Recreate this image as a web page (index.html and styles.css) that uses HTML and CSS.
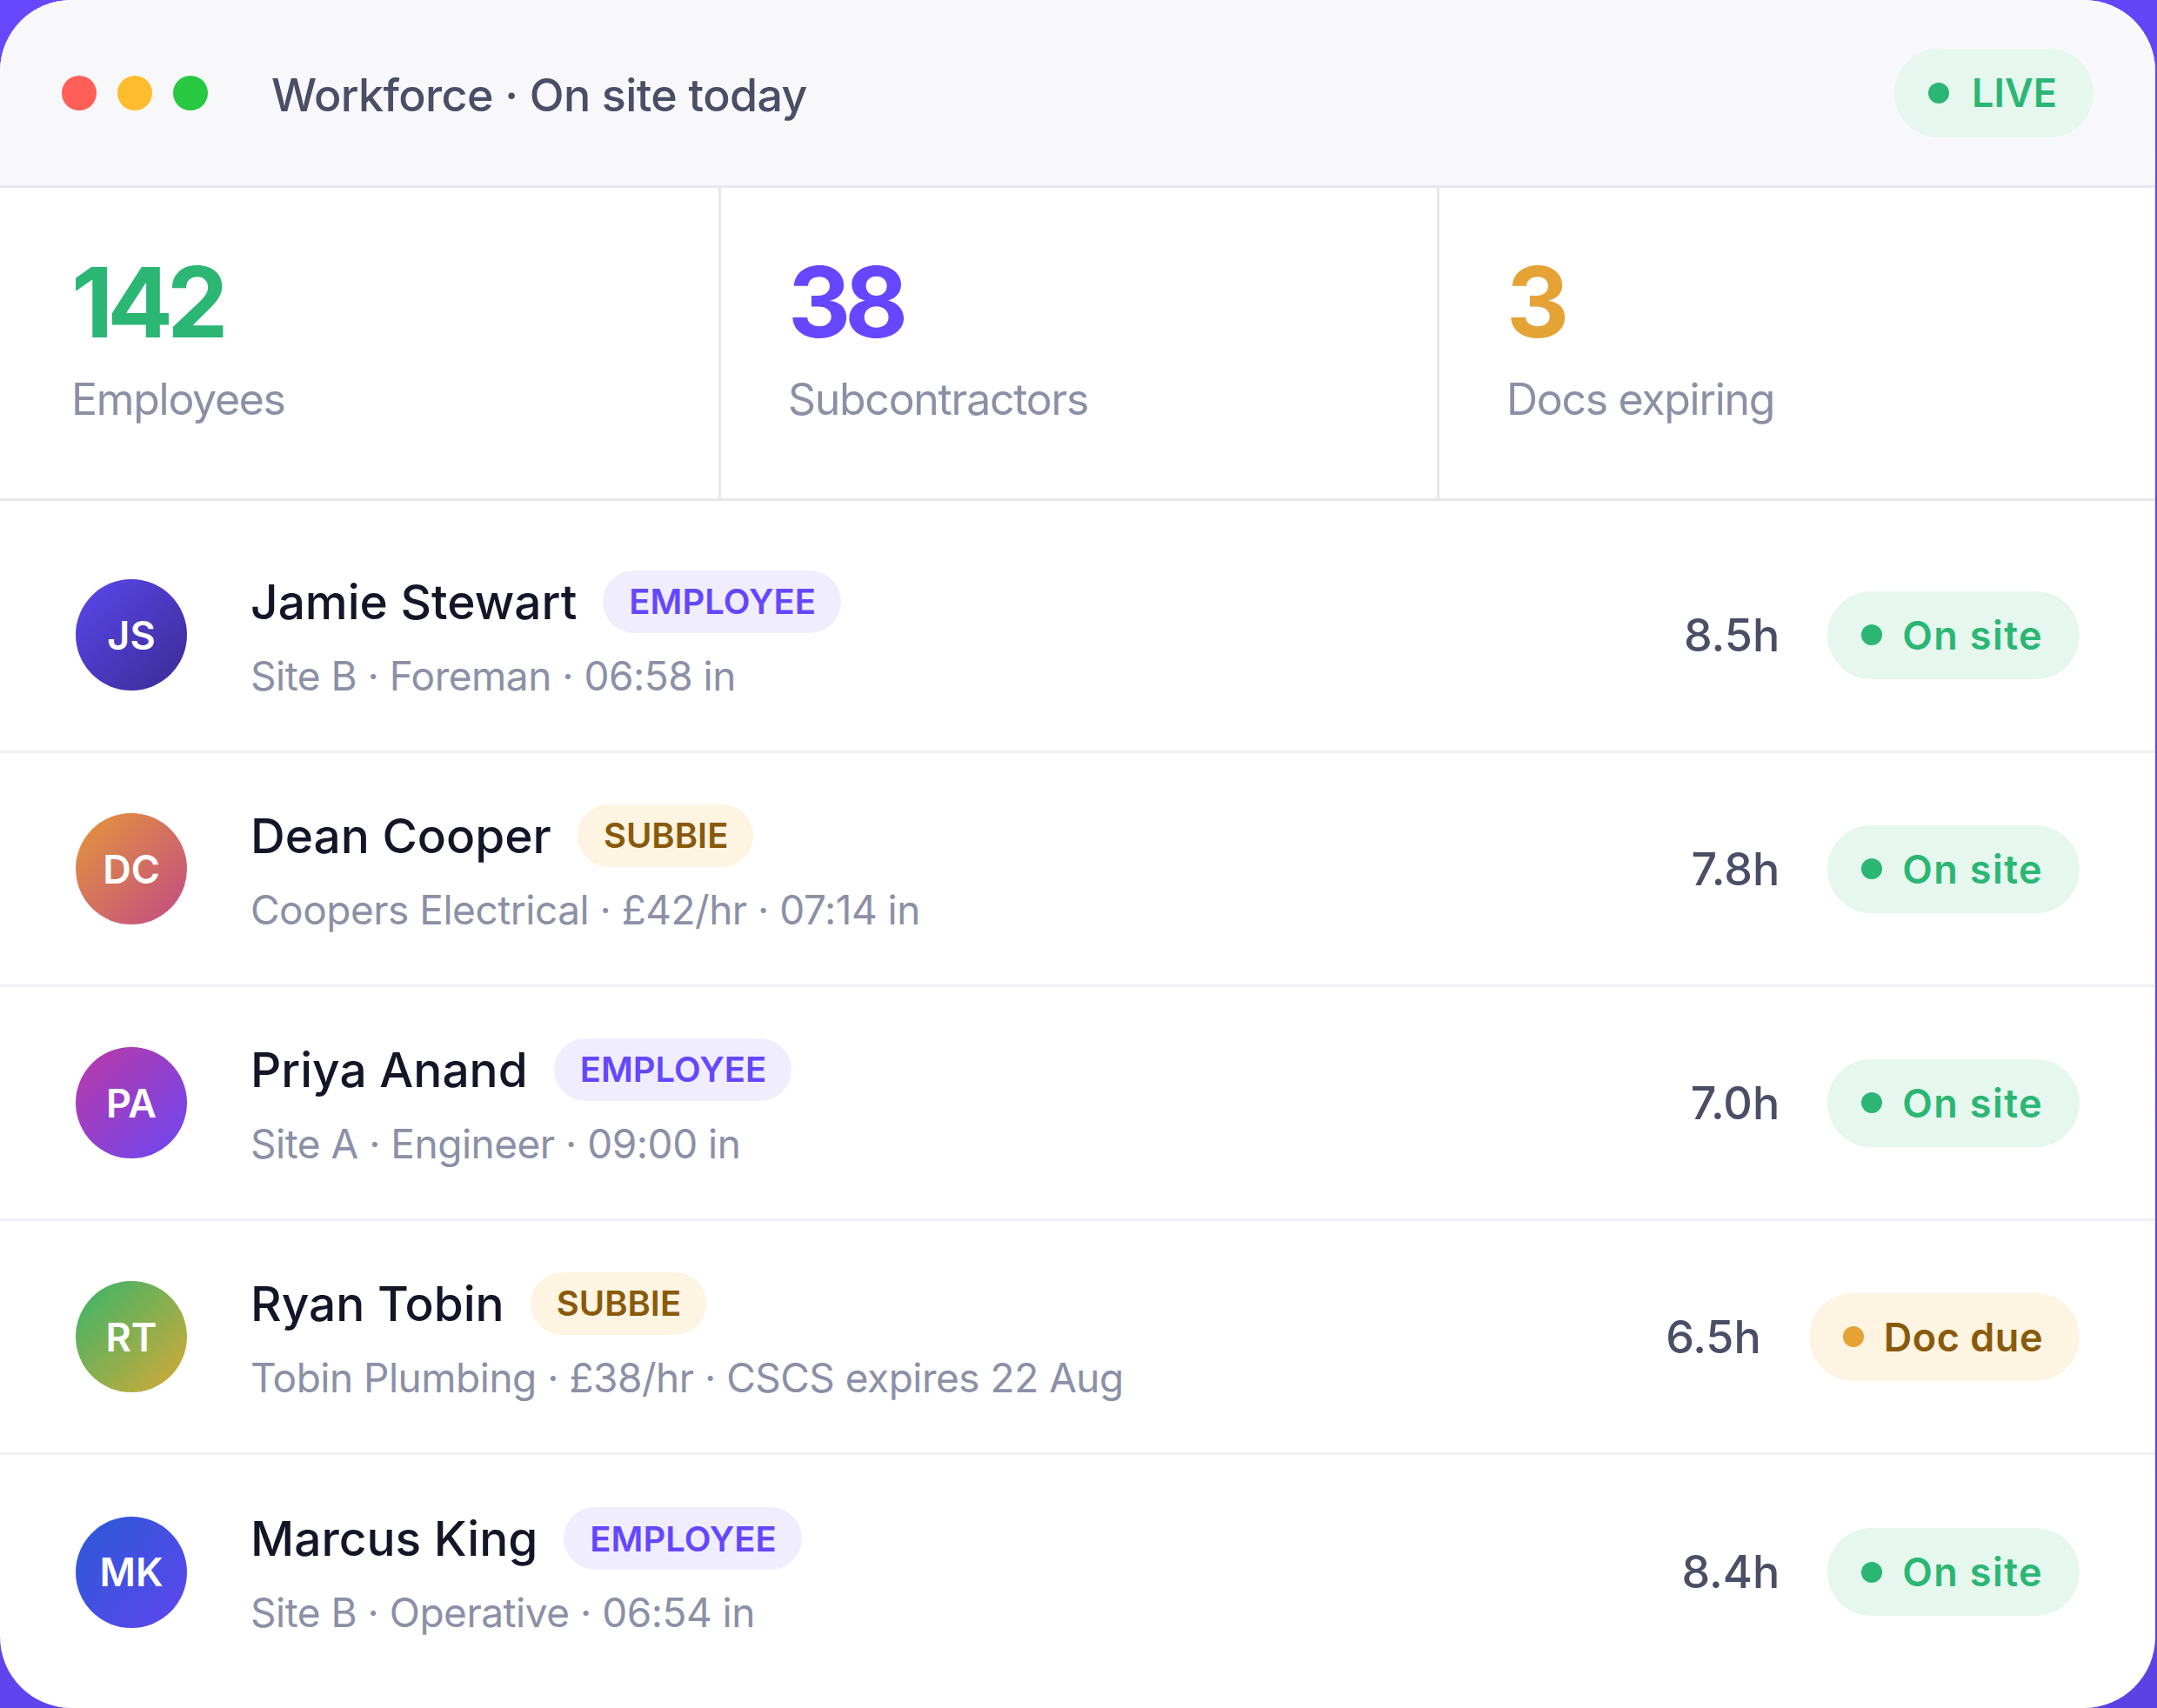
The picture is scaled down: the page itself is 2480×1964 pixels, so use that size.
FILE: index.html
```html
<!DOCTYPE html>
<html lang="en">
<head>
<meta charset="utf-8">
<title>Workforce · On site today</title>
<link rel="stylesheet" href="styles.css">
</head>
<body>
<div class="window">
  <header class="titlebar">
    <div class="lights">
      <span class="light red"></span>
      <span class="light yellow"></span>
      <span class="light green"></span>
    </div>
    <div class="title">Workforce · On site today</div>
    <div class="live"><span class="dot"></span>LIVE</div>
  </header>

  <section class="stats">
    <div class="stat">
      <div class="num num-green">142</div>
      <div class="label">Employees</div>
    </div>
    <div class="stat">
      <div class="num num-purple">38</div>
      <div class="label">Subcontractors</div>
    </div>
    <div class="stat">
      <div class="num num-amber">3</div>
      <div class="label">Docs expiring</div>
    </div>
  </section>

  <section class="list">
    <div class="row">
      <div class="avatar av-js">JS</div>
      <div class="info">
        <div class="nameline"><span class="name">Jamie Stewart</span><span class="tag tag-emp">EMPLOYEE</span></div>
        <div class="sub">Site B · Foreman · 06:58 in</div>
      </div>
      <div class="hours">8.5h</div>
      <div class="status ok"><span class="dot"></span>On site</div>
    </div>
    <div class="row">
      <div class="avatar av-dc">DC</div>
      <div class="info">
        <div class="nameline"><span class="name">Dean Cooper</span><span class="tag tag-sub">SUBBIE</span></div>
        <div class="sub">Coopers Electrical · £42/hr · 07:14 in</div>
      </div>
      <div class="hours">7.8h</div>
      <div class="status ok"><span class="dot"></span>On site</div>
    </div>
    <div class="row">
      <div class="avatar av-pa">PA</div>
      <div class="info">
        <div class="nameline"><span class="name">Priya Anand</span><span class="tag tag-emp">EMPLOYEE</span></div>
        <div class="sub">Site A · Engineer · 09:00 in</div>
      </div>
      <div class="hours">7.0h</div>
      <div class="status ok"><span class="dot"></span>On site</div>
    </div>
    <div class="row">
      <div class="avatar av-rt">RT</div>
      <div class="info">
        <div class="nameline"><span class="name">Ryan Tobin</span><span class="tag tag-sub">SUBBIE</span></div>
        <div class="sub">Tobin Plumbing · £38/hr · CSCS expires 22 Aug</div>
      </div>
      <div class="hours">6.5h</div>
      <div class="status warn"><span class="dot"></span>Doc due</div>
    </div>
    <div class="row">
      <div class="avatar av-mk">MK</div>
      <div class="info">
        <div class="nameline"><span class="name">Marcus King</span><span class="tag tag-emp">EMPLOYEE</span></div>
        <div class="sub">Site B · Operative · 06:54 in</div>
      </div>
      <div class="hours">8.4h</div>
      <div class="status ok"><span class="dot"></span>On site</div>
    </div>
  </section>
</div>
</body>
</html>
```

FILE: styles.css
```css
* { box-sizing: border-box; }

html, body {
  margin: 0;
  padding: 0;
}

body {
  width: 2480px;
  height: 1964px;
  overflow: hidden;
  background: linear-gradient(160deg, #6648ff 0%, #5c42e4 100%);
  font-family: Inter, "Noto Sans", "Liberation Sans", sans-serif;
}

.window {
  width: 2478px;
  height: 1964px;
  background: #ffffff;
  border-radius: 82px;
  overflow: hidden;
}

/* Title bar */
.titlebar {
  height: 216px;
  background: #f8f8fb;
  border-bottom: 3px solid #e7e7ee;
  display: flex;
  align-items: center;
  padding: 0 71px;
}

.lights {
  display: flex;
  gap: 24px;
}

.light {
  width: 40px;
  height: 40px;
  border-radius: 50%;
}
.red { background: #ff5f57; }
.yellow { background: #febc2e; }
.green { background: #28c840; }

.title {
  margin-left: 73px;
  margin-top: 5px;
  font-size: 52px;
  font-weight: 500;
  color: #4a4e66;
  letter-spacing: -0.6px;
}

.live {
  margin-left: auto;
  height: 102px;
  border-radius: 51px;
  background: #e5f7ee;
  display: flex;
  align-items: center;
  padding: 0 42px 0 39px;
  gap: 26px;
  font-size: 45px;
  font-weight: 600;
  letter-spacing: 0;
  color: #2bb673;
}
.live .dot {
  width: 24px;
  height: 24px;
  border-radius: 50%;
  background: #2bb673;
}

/* Stats */
.stats {
  display: grid;
  grid-template-columns: repeat(3, 1fr);
  border-bottom: 3px solid #e7e7ee;
}

.stat {
  height: 357px;
  padding: 75px 0 0 82px;
}
.stat + .stat {
  border-left: 3px solid #e7e7ee;
  padding-left: 77px;
}

.num {
  font-size: 112px;
  font-weight: 700;
  line-height: 1;
  letter-spacing: -7px;
}
.num-green { color: #2bb673; }
.num-purple { color: #6447ff; }
.num-amber { color: #e5a336; }

.label {
  margin-top: 26px;
  font-size: 50px;
  line-height: 60px;
  color: #8c90a6;
  letter-spacing: -1.3px;
}

/* List */
.list {
  padding-top: 21px;
}

.row {
  height: 269px;
  display: flex;
  align-items: center;
  padding: 0 87px;
  border-bottom: 3px solid #efeff4;
}
.row:last-child { border-bottom: none; }

.avatar {
  width: 128px;
  height: 128px;
  border-radius: 50%;
  flex: none;
  display: flex;
  align-items: center;
  justify-content: center;
  color: #ffffff;
  font-size: 45px;
  font-weight: 600;
}
.av-js { background: linear-gradient(135deg, #5b47ee 0%, #3b2b92 100%); }
.av-dc { background: linear-gradient(135deg, #e4973a 0%, #c24a85 100%); }
.av-pa { background: linear-gradient(135deg, #bb3aa6 0%, #6c46f2 100%); }
.av-rt { background: linear-gradient(135deg, #35b56b 0%, #d9a936 100%); }
.av-mk { background: linear-gradient(135deg, #2a5ad6 0%, #5f45ee 100%); }

.info {
  margin-left: 73px;
  flex: 1;
  display: flex;
  flex-direction: column;
  gap: 22px;
}

.nameline {
  display: flex;
  align-items: center;
  gap: 30px;
}

.name {
  font-size: 55px;
  font-weight: 500;
  line-height: 66px;
  color: #141628;
  letter-spacing: 0;
}

.tag {
  height: 72px;
  border-radius: 36px;
  padding: 0 29px 0 30px;
  display: flex;
  align-items: center;
  font-size: 40px;
  font-weight: 600;
  letter-spacing: 0;
}
.tag-emp { background: #f0eefe; color: #6447ff; }
.tag-sub { background: #fdf4e2; color: #8a5a0b; }

.sub {
  font-size: 46px;
  line-height: 55px;
  color: #8c90a6;
  letter-spacing: -0.5px;
}

.hours {
  font-size: 52px;
  font-weight: 500;
  color: #4a4e66;
  margin-right: 55px;
}

.status {
  height: 101px;
  border-radius: 51px;
  display: flex;
  align-items: center;
  padding: 0 42px 0 39px;
  gap: 23px;
  font-size: 45px;
  font-weight: 600;
  letter-spacing: 1.4px;
}
.status .dot {
  width: 24px;
  height: 24px;
  border-radius: 50%;
}
.status.ok { background: #e5f7ee; color: #2bb673; }
.status.ok .dot { background: #2bb673; }
.status.warn { background: #fdf4e2; color: #8a5a0b; letter-spacing: 0.5px; }
.status.warn .dot { background: #e5a336; }
```
